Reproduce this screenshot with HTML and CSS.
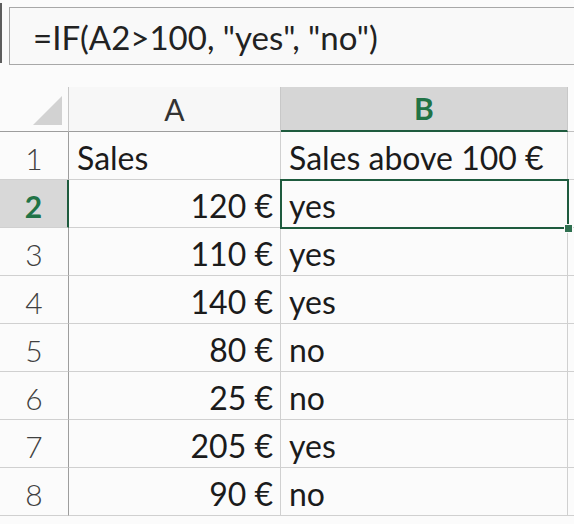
FILE: index.html
```html
<!DOCTYPE html>
<html lang="en">
<head>
    <meta charset="UTF-8">
    <title>IF formula</title>
    <link rel="stylesheet" href="styles.css">
</head>
<body>
    <div class="formula-row">
        <div class="edge"></div>
        <div class="formula-box">=IF(A2&gt;100, "yes", "no")</div>
    </div>

    <div class="sheet">
        <div class="corner"><span class="tri"></span></div>
        <div class="col-head">A</div>
        <div class="col-head active">B</div>
        <div class="col-head blank"></div>

        <div class="row-head">1</div>
        <div class="cell">Sales</div>
        <div class="cell">Sales above 100 €</div>
        <div class="cell blank"></div>

        <div class="row-head active">2</div>
        <div class="cell num">120 €</div>
        <div class="cell selected">yes<span class="handle"></span></div>
        <div class="cell blank"></div>

        <div class="row-head">3</div>
        <div class="cell num">110 €</div>
        <div class="cell">yes</div>
        <div class="cell blank"></div>

        <div class="row-head">4</div>
        <div class="cell num">140 €</div>
        <div class="cell">yes</div>
        <div class="cell blank"></div>

        <div class="row-head">5</div>
        <div class="cell num">80 €</div>
        <div class="cell">no</div>
        <div class="cell blank"></div>

        <div class="row-head">6</div>
        <div class="cell num">25 €</div>
        <div class="cell">no</div>
        <div class="cell blank"></div>

        <div class="row-head">7</div>
        <div class="cell num">205 €</div>
        <div class="cell">yes</div>
        <div class="cell blank"></div>

        <div class="row-head">8</div>
        <div class="cell num">90 €</div>
        <div class="cell">no</div>
        <div class="cell blank"></div>
    </div>
</body>
</html>
```

FILE: styles.css
```css
* { margin: 0; padding: 0; box-sizing: border-box; }
body {
    font-family: "Lato", "Open Sans", sans-serif;
    background: #fbfbfb;
    color: #1b1b1b;
    overflow: hidden;
}

/* formula bar */
.formula-row { display: flex; align-items: flex-start; padding-top: 3px; gap: 7px; }
.edge { width: 2px; height: 60px; background: #5e5e5e; }
.formula-box {
    flex: 1;
    height: 58px;
    margin-top: 4px;
    margin-right: -4px;
    border: 1px solid #a8a8a8;
    border-right: none;
    background: #f9f9f9;
    font-size: 33px;
    line-height: 58px;
    padding-left: 23px;
    color: #222;
    white-space: nowrap;
}

/* grid */
.sheet {
    margin-top: 22px;
    display: grid;
    grid-template-columns: 69px 212px 287px 1fr;
    grid-template-rows: 45px repeat(8, 48px);
    font-size: 32px;
}
.corner {
    position: relative;
    border-right: 1px solid #c8c8c8;
    border-bottom: 1px solid #9d9d9d;
}
.tri {
    position: absolute;
    right: 6px;
    bottom: 6px;
    width: 0;
    height: 0;
    border-left: 29px solid transparent;
    border-bottom: 29px solid #d2d2d2;
}
.col-head {
    border-right: 1px solid #c8c8c8;
    border-bottom: 1px solid #9d9d9d;
    text-align: center;
    line-height: 44px;
    color: #333;
    background: #f7f7f7;
    font-size: 30px;
}
.col-head.active {
    background: #d6d6d6;
    color: #217346;
    font-weight: 700;
    border-bottom: 2px solid #1e5b3e;
    line-height: 43px;
}
.col-head.blank { background: #fbfbfb; border-right: none; border-bottom-color: #c0c0c0; }
.row-head {
    border-right: 1px solid #9d9d9d;
    border-bottom: 1px solid #d0d0d0;
    text-align: center;
    padding-top: 3px;
    line-height: 46px;
    color: #404040;
    font-weight: 300;
    font-size: 30px;
}
.row-head.active {
    background: #d8d8d8;
    color: #217346;
    font-weight: 700;
    border-right: 2px solid #1e5b3e;
}
.cell {
    position: relative;
    border-right: 1px solid #d0d0d0;
    border-bottom: 1px solid #d0d0d0;
    padding: 3px 7px 0 8px;
    line-height: 46px;
    white-space: nowrap;
}
.cell.num { text-align: right; padding-right: 7px; }
.cell.blank { border-right: none; }
.cell.selected {
    outline: 2px solid #1e5b3e;
    outline-offset: -1px;
    z-index: 1;
}
.handle {
    position: absolute;
    right: -6px;
    bottom: -6px;
    width: 9px;
    height: 9px;
    background: #2f7050;
    border: 1px solid #fbfbfb;
}
```
